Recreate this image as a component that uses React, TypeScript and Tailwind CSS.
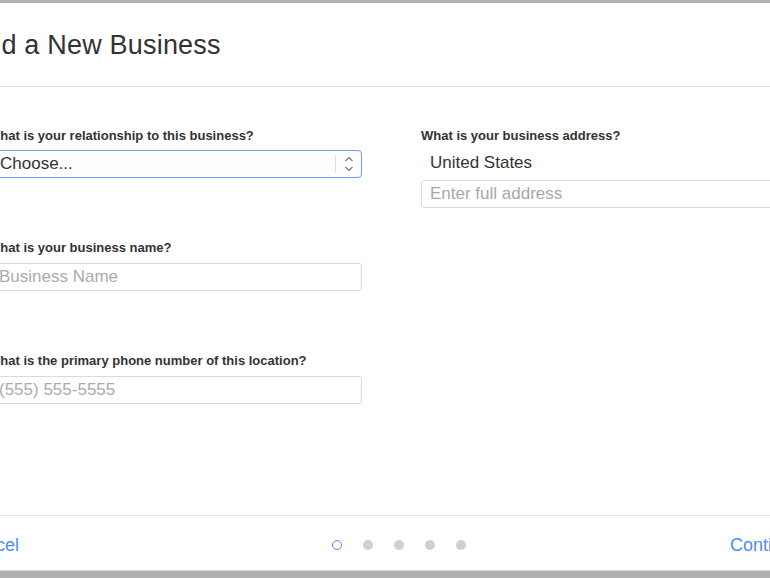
export default function App() {
  const font = { fontFamily: '"Liberation Sans", Arial, sans-serif' };
  return (
    <div
      className="w-[770px] h-[578px] overflow-hidden bg-[#b1b1b1] pt-[3px] pb-[7px] flex flex-col"
      style={font}
    >
      <div className="flex-1 bg-white flex flex-col -ml-[40px] w-[877px] border-b border-[#d6d6d6]">
        {/* header */}
        <div className="h-[84px] border-b border-[#dedede] pl-[8px] flex items-center">
          <h1 className="text-[27px] text-[#333] tracking-[0.2px] pt-[1px]">Add a New Business</h1>
        </div>

        {/* body */}
        <div className="flex-1 pl-[28px] pt-[41px] flex gap-[59px]">
          <div className="w-[374px] flex flex-col">
            <Label>What is your relationship to this business?</Label>
            <div className="mt-[6px] h-[28px] border border-[#6e9ef5] rounded-[4px] bg-[#fdfdfd] flex items-center">
              <span className="flex-1 pl-[11px] text-[17px] text-[#333]">Choose...</span>
              <div className="w-px h-[18px] bg-[#dcdcdc]" />
              <div className="w-[25px] flex justify-center">
                <svg width="10" height="18" viewBox="0 0 10 18" fill="none" stroke="#777" strokeWidth="1.2">
                  <path d="M1.5 6 L5 2.5 L8.5 6" />
                  <path d="M1.5 12 L5 15.5 L8.5 12" />
                </svg>
              </div>
            </div>

            <div className="mt-[62px]">
              <Label>What is your business name?</Label>
            </div>
            <Input placeholder="Business Name" />

            <div className="mt-[62px]">
              <Label>What is the primary phone number of this location?</Label>
            </div>
            <Input placeholder="(555) 555-5555" />
          </div>

          <div className="flex-1 flex flex-col">
            <Label>What is your business address?</Label>
            <div className="mt-[9px] h-[20px] leading-[20px] pl-[9px] text-[17px] text-[#333]">United States</div>
            <div className="mt-[7px] h-[28px] border border-[#d9d9d9] rounded-[3px] flex items-center pl-[8px] text-[17px] text-[#a9a9a9]">
              Enter full address
            </div>
          </div>
        </div>

        {/* footer */}
        <div className="h-[55px] border-t border-[#e6e6e6] pt-[4px] grid grid-cols-[1fr_auto_1fr] items-center">
          <span className="pl-[3px] text-[18px] text-[#4f8cf6]">Cancel</span>
          <div className="flex items-center gap-[21px]">
            <span className="w-[10px] h-[10px] rounded-full border-[1.5px] border-[#4f8cf6]" />
            <span className="w-[10px] h-[10px] rounded-full bg-[#d0d0d0]" />
            <span className="w-[10px] h-[10px] rounded-full bg-[#d0d0d0]" />
            <span className="w-[10px] h-[10px] rounded-full bg-[#d0d0d0]" />
            <span className="w-[10px] h-[10px] rounded-full bg-[#d0d0d0]" />
          </div>
          <span className="justify-self-end pr-[35px] text-[18px] text-[#4f8cf6]">Continue</span>
        </div>
      </div>
    </div>
  );
}

function Label({ children }: { children: React.ReactNode }) {
  return <div className="text-[13px] leading-[16px] font-bold text-[#333]">{children}</div>;
}

function Input({ placeholder }: { placeholder: string }) {
  return (
    <div className="mt-[7px] h-[28px] border border-[#dadada] rounded-[3px] flex items-center pl-[10px] text-[17px] text-[#ababab]">
      {placeholder}
    </div>
  );
}
